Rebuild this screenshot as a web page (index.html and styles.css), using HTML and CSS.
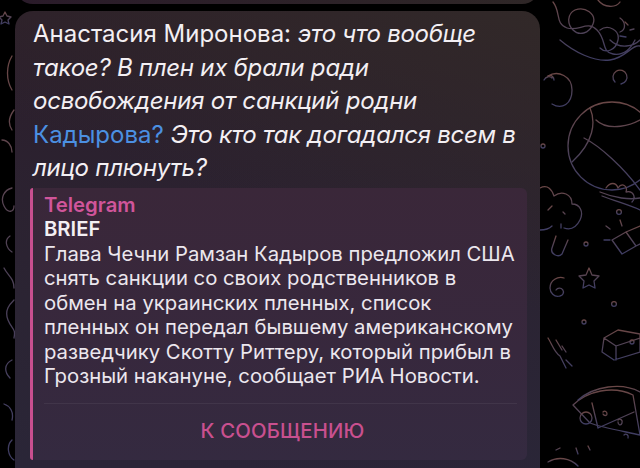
FILE: index.html
```html
<!DOCTYPE html>
<html lang="ru">
<head>
<meta charset="utf-8">
<link rel="stylesheet" href="styles.css">
</head>
<body>
<div class="screen">
  <svg class="wall" width="640" height="468" viewBox="0 0 640 468" fill="none" stroke-width="1.3" stroke-linecap="round" stroke-linejoin="round">
    <defs>
      <linearGradient id="wg" x1="0" y1="0" x2="0" y2="1">
        <stop offset="0" stop-color="#6a4746"/>
        <stop offset="0.5" stop-color="#4f4256"/>
        <stop offset="1" stop-color="#3f3d63"/>
      </linearGradient>
    </defs>
    <g stroke="url(#wg)">
      <path d="M553 2c8 10 2 22 14 26s20-8 30 2 4 22 16 24 18-6 22-14M575 10c10-4 22 4 18 14s-14 12-20 6-6-16 2-20M598 0c6 8 18 8 22 2M600 30c8-6 20 0 18 10s-12 14-18 8M610 40c10 10 24 6 30 0M560 40c14 12 34 22 50 20s22-16 30-14M620 18c6 4 6 12 0 14"/>
      <path d="M625 22l3 3M630 30l4-1M620 36l6 1"/>
      <path d="M615 82a7 7 0 1 1 6 2"/>
      <path d="M548 76c10-6 24 0 24 14s-10 20-20 14"/>
      <path d="M548 76c4-2 6 2 6 4M544 80c2-4 6-4 8-2"/>
      <circle cx="612" cy="146" r="44"/>
      <path d="M590 108c6 14 4 34-18 54M596 120c10 10 36 10 58-10M584 138c16 8 40 30 56 52"/>
      <circle cx="543" cy="146" r="2"/>
      <path d="M606 188c4-6 10-6 12 0 4-6 10-2 8 4 8-2 10 6 6 10M600 192c14 6 30 8 40 6M602 196c16 6 30 10 38 14"/>
      <path d="M540 188c8-4 12 2 14 8 8-6 18-2 18 8 8 0 12 8 8 16s-10 10-16 8M540 230c6 0 10-2 12-4"/>
      <path d="M556 236l-4 12c-2 6 6 10 10 6l6-14"/>
      <path d="M552 206l-4 4M561 224v4M563 212l2 2"/>
      <path d="M612 240l14-8 10 14-14 8zM626 232l14-6M636 246l6-3"/>
      <circle cx="619" cy="212" r="2.4"/>
      <path d="M620 220l2 6M606 226l4 3M604 240l6 0"/>
      <circle cx="586" cy="244" r="2"/>
      <path d="M589 268l3 7 7 1-5 5 1 7-6-3-6 3 1-7-5-5 7-1z"/>
      <path d="M556 290a4 4 0 1 1 4 6c-6 2-10-4-10-8 0-8 8-12 14-10"/>
      <circle cx="614" cy="304" r="2.4"/>
      <circle cx="584" cy="322" r="2"/>
      <path d="M604 338l14-8 22 4v18l-26 8-12-8zM604 338l12 8 24-8M616 346v14"/>
      <circle cx="632" cy="342" r="2"/>
      <path d="M548 338c4 6 6 14 12 18l6 12M556 340l6 10M562 346l4 6M566 360l6 6"/>
      <path d="M573 405c14-14 40-20 60-10l7 40c-18-4-40-8-50-12z"/>
      <path d="M578 400c16-14 44-18 62-8"/>
      <path d="M592 403l6 25M598 428l36-16"/>
      <circle cx="586" cy="418" r="6"/>
      <path d="M603 412c2-2 4 0 4 2s-3 2-4 0M618 420c2-2 5 0 4 3s-4 2-4-1M624 435c2-2 5 0 4 3"/>
      <path d="M576 448l2 6M588 446l2 4M560 448l-4 2"/>
      <path d="M548 462c10-6 22-4 30 4"/>
      <path d="M5 12l2 4 4 1-3 3 1 4-4-2-4 2 1-4-3-3 4-1z"/>
      <path d="M12 56c-6 10-6 24 0 34M14 110c-6 8-6 14-2 20M2 140c6 0 10 6 10 12M12 188c-8 2-12 10-8 18s10 6 10 0M10 236c-6 4-4 12 2 16M4 268c4 8 10 10 10 20M14 300c-4 4-10 10-6 20s8 8 6 18M12 360c-8 4-8 12-2 18M4 404c6 2 10 8 8 16M12 440c-6 6-4 16 2 20"/>
    </g>
  </svg>
  <div class="prev-bubble"></div>
  <div class="bubble">
    <p class="msg"><span class="name">Анастасия Миронова:</span> <em>это что вообще</em><br><em>такое? В плен их брали ради</em><br><em>освобождения от санкций родни</em><br><span class="link">Кадырова?</span> <em>Это кто так догадался всем в</em><br><em>лицо плюнуть?</em></p>
    <div class="preview">
      <div class="site">Telegram</div>
      <div class="title">BRIEF</div>
      <div class="desc">Глава Чечни Рамзан Кадыров предложил США<br>снять санкции со своих родственников в<br>обмен на украинских пленных, список<br>пленных он передал бывшему американскому<br>разведчику Скотту Риттеру, который прибыл в<br>Грозный накануне, сообщает РИА Новости.</div>
      <div class="action">К СООБЩЕНИЮ</div>
    </div>
  </div>
</div>
</body>
</html>
```

FILE: styles.css
```css
html, body {
  margin: 0;
  padding: 0;
  background: #000;
}

.screen {
  position: relative;
  width: 640px;
  height: 468px;
  overflow: hidden;
  background: #000;
  display: flex;
  flex-direction: column;
  gap: 7px;
  padding-left: 15px;
  box-sizing: border-box;
}

.wall {
  position: absolute;
  left: 0;
  top: 0;
}

.prev-bubble {
  position: relative;
  width: 525px;
  height: 24px;
  margin-top: -20px;
  flex: none;
  border-radius: 0 0 18px 18px;
  background: linear-gradient(90deg, #2a1b2a, #2f2727);
}

.bubble {
  position: relative;
  width: 525px;
  flex: none;
  border-radius: 18px 18px 0 0;
  padding: 6px 13px 10px 15px;
  box-sizing: border-box;
  height: 480px;
  background:
    linear-gradient(200deg, rgba(50, 42, 40, 0.9) 0%, rgba(50, 42, 40, 0) 45%),
    linear-gradient(180deg, #2c1e2b 0%, #2b2433 60%, #2a2638 100%);
  font-family: Inter, "Noto Sans", sans-serif;
  color: #f3eff3;
}

.msg {
  margin: 0;
  padding-left: 3px;
  font-size: 24px;
  line-height: 33.5px;
  white-space: nowrap;
}

.msg em {
  font-style: italic;
  letter-spacing: -0.25px;
}

.link {
  color: #4b90e2;
}

.preview {
  margin-top: 3px;
  position: relative;
  border-radius: 6px;
  padding: 5px 6px 0 14px;
  background: linear-gradient(180deg, #3a2739 0%, #37283d 60%, #342a40 100%);
  height: 272px;
  box-sizing: border-box;
  font-size: 20.3px;
  line-height: 24.5px;
  white-space: nowrap;
}

.preview::before {
  content: "";
  position: absolute;
  left: 0;
  top: 0;
  bottom: 0;
  width: 3px;
  border-radius: 6px 0 0 6px;
  background: #c84f8f;
}

.site {
  color: #d0559a;
  font-weight: 600;
}

.title {
  font-weight: 600;
  color: #f3eff3;
}

.desc {
  color: #ece7ee;
  padding-bottom: 14px;
  margin-right: 4px;
  border-bottom: 1px solid rgba(255, 255, 255, 0.06);
}

.action {
  height: 56px;
  display: flex;
  align-items: center;
  justify-content: center;
  color: #c9508f;
  font-weight: 500;
  font-size: 20.3px;
  letter-spacing: 0.2px;
}
```
